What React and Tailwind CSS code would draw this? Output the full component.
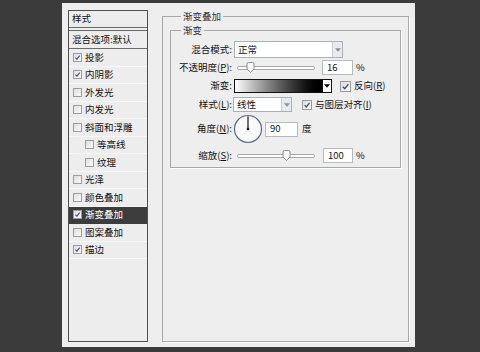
import React from 'react';

const items = [
  { label: '投影', checked: true },
  { label: '内阴影', checked: true },
  { label: '外发光' },
  { label: '内发光' },
  { label: '斜面和浮雕' },
  { label: '等高线', sub: true },
  { label: '纹理', sub: true },
  { label: '光泽' },
  { label: '颜色叠加' },
  { label: '渐变叠加', checked: true, active: true },
  { label: '图案叠加' },
  { label: '描边', checked: true },
];

const Check = ({ checked, size = 'w-[9px] h-[9px]' }) => (
  <div className={`${size} shrink-0 border border-[#9c9c9c] bg-gradient-to-br from-[#dedede] to-[#fbfbfb] flex items-center justify-center`}>
    {checked && (
      <svg viewBox="0 0 10 10" className="w-full h-full">
        <path d="M2 5.2 L4.2 7.4 L8.2 2.4" fill="none" stroke="#3d4f74" strokeWidth="1.6" />
      </svg>
    )}
  </div>
);

const Arrow = ({ dark }) => (
  <svg viewBox="0 0 7 4" className="w-[6px] h-[4px]">
    <path d="M0 0 H7 L3.5 4 Z" fill={dark ? '#000' : '#8a8f99'} />
  </svg>
);

const Select = ({ value, w }) => (
  <div className={`${w} h-full bg-white border border-[#a9b0ba] flex items-center`}>
    <span className="flex-1 pl-[3px]">{value}</span>
    <div className="w-[10px] h-full border-l border-[#c8ced6] bg-[#e7eaef] flex items-center justify-center">
      <Arrow />
    </div>
  </div>
);

const Slider = ({ pos }) => (
  <div className="w-[78px] h-full flex items-center">
    <div className="relative w-full h-[4px] rounded-full border border-[#a7a7a7] bg-white">
      <svg viewBox="0 0 9 11" className="absolute w-[9px] h-[11px] top-[-5px]" style={{ left: pos - 4.5 }}>
        <path d="M1 2 Q1 0.5 2.5 0.5 H6.5 Q8 0.5 8 2 V7 L4.5 10.5 L1 7 Z" fill="#f7f7f7" stroke="#8c8c8c" />
      </svg>
    </div>
  </div>
);

const Field = ({ value, w }) => (
  <div className={`${w} h-full bg-white border border-[#b4bac2] flex items-center pl-[4px]`}>{value}</div>
);

const Label = ({ children }) => <div className="w-[61px] shrink-0 text-right">{children}</div>;

export default function App() {
  return (
    <div
      className="w-[480px] h-[352px] bg-[#3b3b3b] overflow-hidden pt-[3px] pl-[62px] text-[9.5px] text-[#111] leading-none"
      style={{ fontFamily: '"Noto Sans CJK SC", "Noto Sans", sans-serif' }}
    >
      <div className="w-[353px] h-[344px] bg-[#eeeeee] flex pl-[6px] pt-[7px]">
        {/* style list */}
        <div className="w-[80px] h-[332px] border border-[#4f4f4f] bg-[#ededed] flex flex-col">
          <div className="h-[17px] border-b border-[#6a6a6a] flex items-center pl-[3px]">样式</div>
          <div className="mt-[2px] h-[19px] border-y border-[#6a6a6a] flex items-center pl-[3px]">混合选项:默认</div>
          {items.map((it) => (
            <div
              key={it.label}
              className={`h-[17.5px] shrink-0 flex items-center gap-[3px] border-b ${
                it.active ? 'bg-[#3d3d3d] text-white border-[#3d3d3d]' : 'border-[#f7f7f7]'
              } ${it.sub ? 'pl-[16px]' : 'pl-[4px]'}`}
            >
              <Check checked={it.checked} />
              <span>{it.label}</span>
            </div>
          ))}
        </div>

        {/* settings */}
        <fieldset className="ml-[14px] w-[247px] h-[332px] border border-[#a8a8a8] shadow-[1px_1px_0_#ffffff] px-[7px]">
          <legend className="ml-[11px] px-[2px] leading-[12px] text-[#333]">渐变叠加</legend>
          <fieldset className="mt-[2px] border border-[#a8a8a8] shadow-[1px_1px_0_#ffffff] pb-[4px]">
            <legend className="ml-[10px] px-[2px] leading-[12px] text-[#333]">渐变</legend>

            <div className="mt-[5px] h-[17px] flex items-center">
              <Label>混合模式:</Label>
              <div className="ml-[2px] h-full">
                <Select value="正常" w="w-[109px]" />
              </div>
            </div>

            <div className="mt-[2px] h-[15px] flex items-center">
              <Label>
                不透明度(<span className="underline">P</span>):
              </Label>
              <div className="ml-[5px] h-full">
                <Slider pos={12} />
              </div>
              <div className="ml-[7px] h-full">
                <Field value="16" w="w-[31px]" />
              </div>
              <span className="ml-[3px]">%</span>
            </div>

            <div className="mt-[4px] h-[14px] flex items-center">
              <Label>渐变:</Label>
              <div className="ml-[2px] w-[89px] h-full border border-[#111] bg-gradient-to-r from-white to-black" />
              <div className="w-[9px] h-full border border-l-0 border-[#111] bg-white flex items-center justify-center">
                <Arrow dark />
              </div>
              <div className="ml-[8px]">
                <Check checked size="w-[11px] h-[11px]" />
              </div>
              <span className="ml-[3px]">
                反向(<span className="underline">R</span>)
              </span>
            </div>

            <div className="mt-[4px] h-[15px] flex items-center">
              <Label>
                样式(<span className="underline">L</span>):
              </Label>
              <div className="ml-[1px] h-full">
                <Select value="线性" w="w-[59px]" />
              </div>
              <div className="ml-[10px]">
                <Check checked size="w-[10px] h-[10px]" />
              </div>
              <span className="ml-[3px]">
                与图层对齐(<span className="underline">I</span>)
              </span>
            </div>

            <div className="mt-[3px] h-[28px] flex items-center">
              <Label>
                角度(<span className="underline">N</span>):
              </Label>
              <svg viewBox="0 0 30 30" className="ml-[1px] w-[30px] h-[30px]">
                <circle cx="15" cy="15" r="13.5" fill="#f9f9f9" stroke="#59667e" strokeWidth="1.2" />
                <line x1="15" y1="15" x2="15" y2="2.5" stroke="#111" strokeWidth="1.2" />
                <circle cx="15" cy="15" r="1.3" fill="#111" />
              </svg>
              <div className="ml-[2px] h-[15px]">
                <Field value="90" w="w-[33px]" />
              </div>
              <span className="ml-[4px]">度</span>
            </div>

            <div className="mt-[5px] h-[15px] flex items-center">
              <Label>
                缩放(<span className="underline">S</span>):
              </Label>
              <div className="ml-[5px] h-full">
                <Slider pos={48} />
              </div>
              <div className="ml-[8px] h-full">
                <Field value="100" w="w-[30px]" />
              </div>
              <span className="ml-[3px]">%</span>
            </div>
          </fieldset>
        </fieldset>
      </div>
    </div>
  );
}
